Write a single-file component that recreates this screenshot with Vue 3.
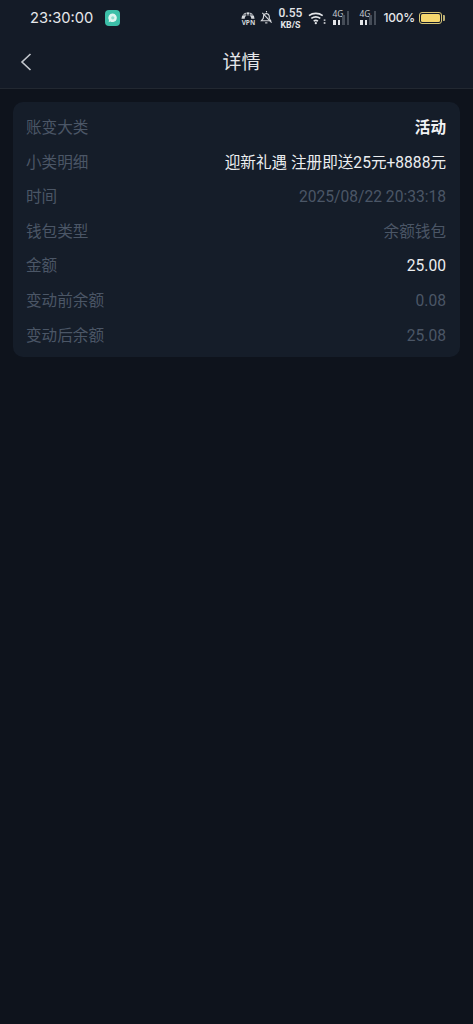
<script setup>
const rows = [
  { label: '账变大类', value: '活动', tone: 'strong' },
  { label: '小类明细', value: '迎新礼遇 注册即送25元+8888元', tone: 'bright' },
  { label: '时间', value: '2025/08/22 20:33:18', tone: 'muted' },
  { label: '钱包类型', value: '余额钱包', tone: 'muted' },
  { label: '金额', value: '25.00', tone: 'bright' },
  { label: '变动前余额', value: '0.08', tone: 'muted' },
  { label: '变动后余额', value: '25.08', tone: 'muted' },
]
</script>

<template>
  <div class="page">
    <header class="top">
      <div class="status">
        <div class="status-left">
          <span class="clock">23:30:00</span>
          <svg class="app-badge" width="15" height="16" viewBox="0 0 15 16"><rect width="15" height="16" rx="4" fill="#3cbfa8"/><path d="M7.800 3.500 A4.300 4.300 0 1 1 5.200 11.400 L3.700 12.200 L4 10.200 A4.300 4.300 0 0 1 7.800 3.500 Z" fill="#dff5f0"/><circle cx="7.800" cy="7.800" r="1.600" fill="#8fdccd"/></svg>
        </div>
        <div class="status-right">
          <span class="vpn">
            <svg width="14" height="10" viewBox="0 0 15 10"><path d="M0.500 10 A7 7 0 0 1 14.500 10 H11 A3.500 3.500 0 0 0 4 10 Z" fill="#d5d8dc"/><path d="M5 1 L6.500 9 M10 1 L8.500 9 M1 6 H14" stroke="#141b27" stroke-width="0.8"/></svg>
            <b>VPN</b>
          </span>
          <svg class="bell" width="13" height="15" viewBox="0 0 14 15" fill="none" stroke="#d5d8dc" stroke-width="1.200"><path d="M1.500 11 H11.500 L10 8.500 V6 A3.200 3.200 0 0 0 4 5 L3.500 8.500 Z"/><path d="M5.500 13.300 H8"/><path d="M7 0.500 V2"/><path d="M2.500 2.500 L12.500 13"/></svg>
          <span class="speed"><b>0.55</b><i>KB/S</i></span>
          <svg class="wifi" width="18" height="14" viewBox="0 0 19 14" fill="none" stroke="#e4e6e9" stroke-width="1.700"><path d="M1 4.500 A12 12 0 0 1 15.500 4.500"/><path d="M3.500 7.500 A8 8 0 0 1 13 7.500"/><path d="M6 10.300 A3.800 3.800 0 0 1 10.500 10.300"/><circle cx="8.250" cy="12.500" r="1.200" fill="#e4e6e9" stroke="none"/><path d="M17.500 8.500 V10 M17.500 11.500 V13" stroke-width="1.800"/></svg>
          <span class="signal"><em>4G</em><span class="bars"><i class="on b1"></i><i class="on b2"></i><i class="b3"></i><i class="b4"></i></span></span>
          <span class="signal"><em>4G</em><span class="bars"><i class="on b1"></i><i class="on b2"></i><i class="b3"></i><i class="b4"></i></span></span>
          <span class="pct">100%</span>
          <span class="battery"><span class="fill"></span></span>
        </div>
      </div>
      <div class="nav">
        <svg class="back" width="12" height="18" viewBox="0 0 12 18" fill="none" stroke="#c4c8ce" stroke-width="1.600"><path d="M10.500 1 L2 9 L10.500 17"/></svg>
        <h1>详情</h1>
      </div>
    </header>
    <main class="content">
      <section class="card">
        <div v-for="row in rows" :key="row.label" class="row">
          <span class="label">{{ row.label }}</span>
          <span class="value" :class="row.tone">{{ row.value }}</span>
        </div>
      </section>
    </main>
  </div>
</template>

<style>
html, body { margin: 0; background: #0e131c; }
</style>

<style scoped>
.page {
  width: 473px;
  height: 1024px;
  background: #0e131c;
  font-family: Roboto, "Noto Sans CJK SC", sans-serif;
  overflow: hidden;
  display: flex;
  flex-direction: column;
}
.top {
  background: #141b27;
  height: 89px;
  box-sizing: border-box;
  border-bottom: 1px solid #222831;
  flex: none;
}
.status {
  height: 36px;
  display: flex;
  align-items: center;
  justify-content: space-between;
  padding: 0 29px 0 30px;
}
.status-left { display: flex; align-items: center; gap: 12px; }
.clock { color: #e6e8eb; font-size: 14.700px; font-family: Inter, "Noto Sans", sans-serif; }
.app-badge { display: block; }
.status-right { display: flex; align-items: center; color: #e4e6e9; }
.vpn { display: flex; flex-direction: column; align-items: center; width: 14px; }
.vpn svg { display: block; }
.vpn b { font-size: 6.500px; line-height: 7px; font-family: "Noto Sans", sans-serif; color: #d5d8dc; }
.bell { margin-left: 5px; }
.speed { display: flex; flex-direction: column; align-items: center; font-family: Roboto, sans-serif; width: 22px; margin-left: 6px; }
.speed b { font-size: 12px; line-height: 14px; font-weight: 500; }
.speed i { font-size: 8.800px; line-height: 10.300px; font-style: normal; font-weight: 700; }
.wifi { margin-left: 7px; }
.signal { display: block; width: 20px; height: 15px; position: relative; margin-left: 7px; }
.wifi + .signal { margin-left: 6px; }
.signal em { font-size: 8.500px; font-style: normal; font-family: "Noto Sans", sans-serif; position: absolute; left: 0; top: -1px; color: #c9cdd2; line-height: 9px; }
.bars { position: absolute; left: 1px; bottom: 0; display: flex; align-items: flex-end; gap: 2px; }
.bars i { width: 2.500px; background: #454c57; display: block; }
.bars i.on { background: #e4e6e9; }
.bars .b1 { height: 5px; }
.bars .b2 { height: 5px; }
.bars .b3 { height: 10px; }
.bars .b4 { height: 14px; }
.signal + .pct { margin-left: 4px; }
.pct { font-size: 12px; letter-spacing: -0.2px; font-weight: 500; font-family: Inter, "Noto Sans", sans-serif; color: #e6e8eb; }
.battery {
  width: 23px; height: 12px; border: 1px solid #d9c777; border-radius: 3px; padding: 1px;
  box-sizing: border-box; position: relative; margin-left: 4px; margin-right: 2px; display: flex;
}
.battery::after { content: ""; position: absolute; right: -4px; top: 2px; width: 2px; height: 6px; background: #b9ad73; border-radius: 0 1px 1px 0; }
.fill { flex: 1; background: #f5d76e; border-radius: 1.500px; }
.nav {
  height: 52px;
  display: flex;
  align-items: center;
  justify-content: center;
  position: relative;
  padding: 0 0 4px 10px;
  box-sizing: border-box;
}
.back { position: absolute; left: 20px; top: 17px; }
h1 { margin: 0; color: #e4e6e9; font-size: 19px; font-weight: 400; }
.content { padding: 13px 13px 0; }
.card {
  background: #151d29;
  border-radius: 10px;
  padding: 9px 14px 4px 13px;
}
.row {
  height: 34.600px;
  line-height: 34.600px;
  display: flex;
  justify-content: space-between;
  align-items: baseline;
  font-size: 15.600px;
}
.label { color: #4b5666; }
.value.muted { color: #4b5666; }
.value.bright { color: #eceef0; }
.value.strong { color: #f2f3f5; font-weight: 700; }
</style>
